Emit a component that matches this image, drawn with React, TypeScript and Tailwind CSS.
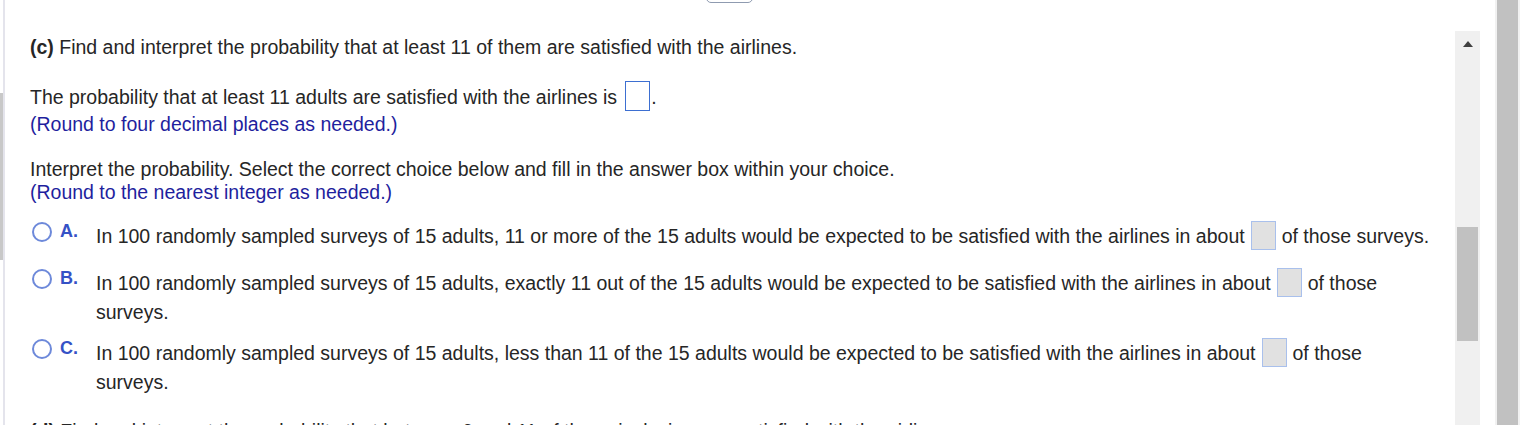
import React from 'react';

const FONT = { fontFamily: '"Liberation Sans", Arial, sans-serif' };

// blank answer field inside an option line
function OptionBox() {
  return (
    <span className="mx-[6px] inline-block h-[29px] w-[25px] align-[-7px] border border-[#a9c0ec] bg-[#e1e1e1]" />
  );
}

interface ChoiceProps {
  letter: string;
  before: string;
  after: string;
  className?: string;
}

function Choice({ letter, before, after, className }: ChoiceProps) {
  return (
    <div className={`flex items-start ${className ?? ''}`}>
      <span className="mt-[6px] ml-[2px] inline-block h-[20px] w-[20px] shrink-0 rounded-full border-2 border-[#6d89da]" />
      <span className="mt-[4px] ml-[8px] w-[36px] shrink-0 text-[18px] font-bold leading-[23px] text-[#3552c6]">{letter}.</span>
      <p className="w-[1342px] pt-[5px] leading-[29px]">
        {before}
        <OptionBox />
        {after}
      </p>
    </div>
  );
}

export default function App() {
  return (
    <div
      className="relative flex h-[425px] w-[1520px] overflow-hidden bg-white text-[19.5px] text-[#262626]"
      style={FONT}
    >
      {/* left pane edge */}
      <div className="relative h-full w-[5px] shrink-0 border-r-2 border-[#e4e4ec]">
        <div className="absolute left-0 top-[93px] h-[167px] w-[3px] bg-[#c8c8c8]" />
      </div>

      {/* top tab */}
      <div className="absolute left-[706px] top-[-10px] h-[13px] w-[47px] rounded-b-[5px] border border-[#8f9bb0]" />

      <div className="w-[1450px] shrink-0 pl-[25px] pt-[33px]">
        <p className="leading-[29px]">
          <b>(c)</b> Find and interpret the probability that at least 11 of them are satisfied with the airlines.
        </p>

        <p className="mt-[19px] leading-[31px]">
          The probability that at least 11 adults are satisfied with the airlines is
          <span className="ml-[8px] mr-[1px] inline-block h-[30px] w-[25px] align-[-7px] border-[1.5px] border-[#3d6fd1] bg-white" />.
        </p>
        <p className="leading-[23px] text-[#1f1f9e]">(Round to four decimal places as needed.)</p>

        <p className="mt-[22px] leading-[23px]">
          Interpret the probability. Select the correct choice below and fill in the answer box within your choice.
        </p>
        <p className="leading-[23px] text-[#1f1f9e]">(Round to the nearest integer as needed.)</p>

        <div className="mt-[12px] flex flex-col">
          <Choice
            letter="A"
            before="In 100 randomly sampled surveys of 15 adults, 11 or more of the 15 adults would be expected to be satisfied with the airlines in about"
            after="of those surveys."
          />
          <Choice
            className="mt-[12px]"
            letter="B"
            before="In 100 randomly sampled surveys of 15 adults, exactly 11 out of the 15 adults would be expected to be satisfied with the airlines in about"
            after="of those surveys."
          />
          <Choice
            className="mt-[6px]"
            letter="C"
            before="In 100 randomly sampled surveys of 15 adults, less than 11 of the 15 adults would be expected to be satisfied with the airlines in about"
            after="of those surveys."
          />
        </div>

        <p className="mt-[20px] leading-[29px]">
          <b>(d)</b> Find and interpret the probability that between 9 and 11 of them, inclusive, are satisfied with the airlines.
        </p>
      </div>

      {/* inner scrollbar */}
      <div className="relative mt-[31px] h-[394px] w-[25px] shrink-0 bg-[#f0f0f0]">
        <div className="mx-auto mt-[10px] h-0 w-0 border-x-[5px] border-b-[6px] border-x-transparent border-b-[#404040]" />
        <div className="absolute left-[2px] top-[196px] h-[114px] w-[21px] bg-[#c1c1c1]" />
      </div>

      <div className="w-[15px] shrink-0" />

      {/* outer scrollbar */}
      <div className="flex h-full w-[25px] shrink-0 bg-[#f1f1f1] px-[2px]">
        <div className="h-full w-full bg-[#c1c1c1]" />
      </div>
    </div>
  );
}
